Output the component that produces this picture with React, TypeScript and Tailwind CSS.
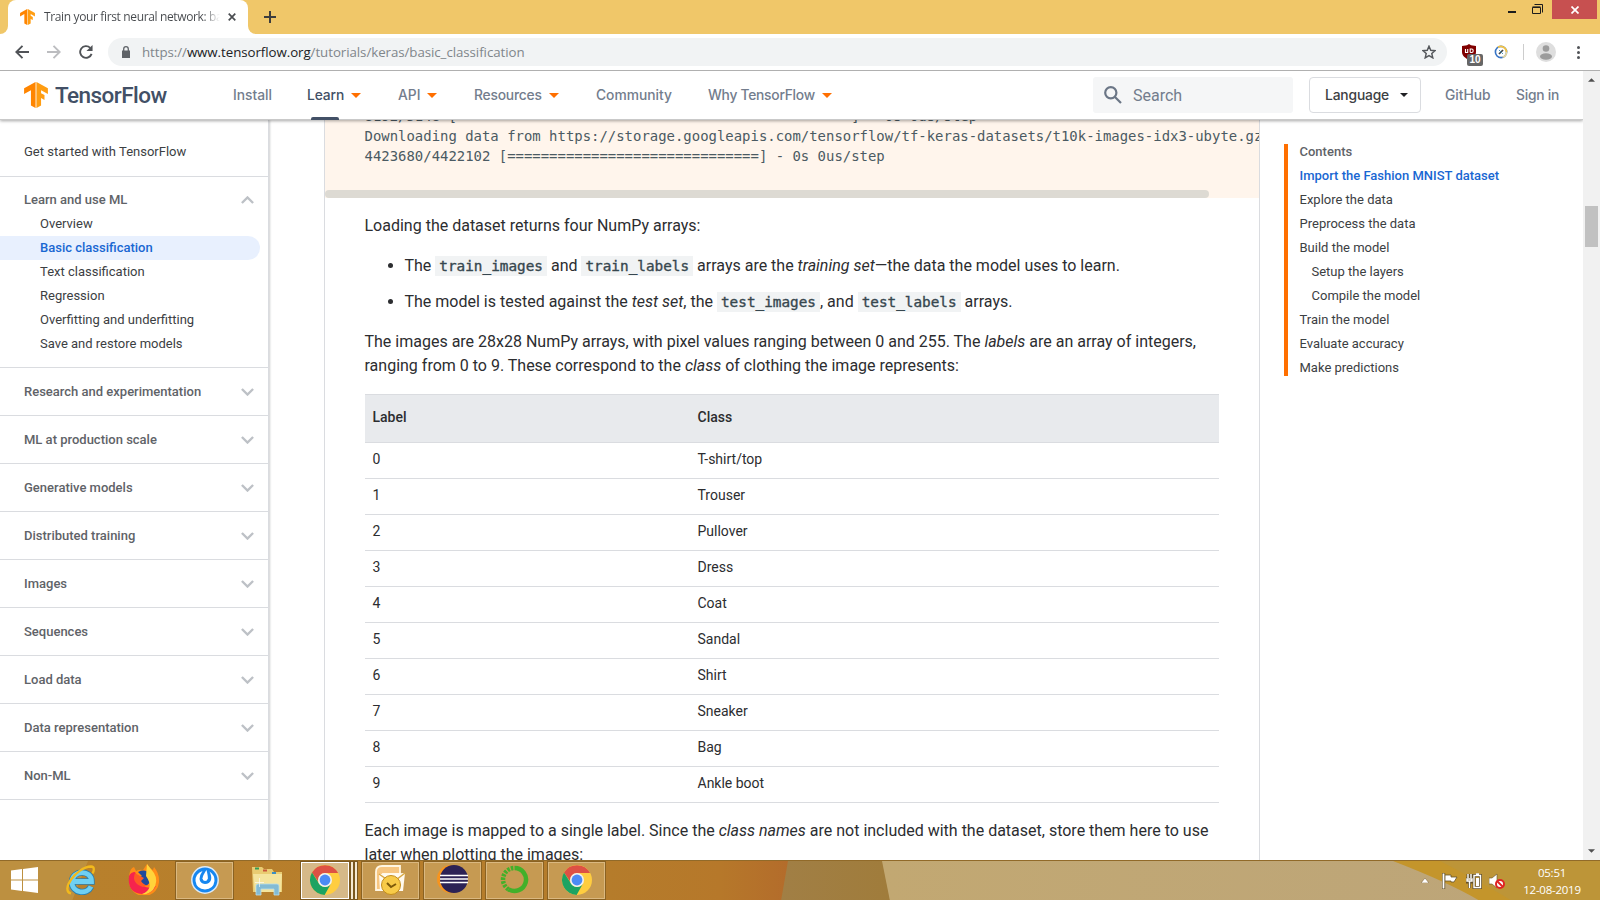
import React from "react";

const sections = ["Research and experimentation", "ML at production scale", "Generative models", "Distributed training", "Images", "Sequences", "Load data", "Data representation", "Non-ML"];
const learnLinks = ["Overview", "Basic classification", "Text classification", "Regression", "Overfitting and underfitting", "Save and restore models"];
const rows = ["T-shirt/top", "Trouser", "Pullover", "Dress", "Coat", "Sandal", "Shirt", "Sneaker", "Bag", "Ankle boot"];
const toc = [
  ["Explore the data", false], ["Preprocess the data", false], ["Build the model", false], ["Setup the layers", true],
  ["Compile the model", true], ["Train the model", false], ["Evaluate accuracy", false], ["Make predictions", false],
] as const;

function TfLogo({ className }: { className: string }) {
  return (
    <svg className={className} viewBox="1.2 0 21.600 24" preserveAspectRatio="none">
      <path d="M11.540 0h.920v24h-.920z" fill="#ffd9a8" />
      <path d="M1.292 5.856 11.540 0v24l-4.095-2.378V7.603l-6.168 3.564z" fill="#ff8500" />
      <path d="m22.722 11.167-.014-5.310L12.460 0v24l4.095-2.378V14.870l3.092 1.788-.018-4.618-3.074-1.756V7.603z" fill="#ff9d12" />
    </svg>
  );
}

function Caret({ className }: { className: string }) {
  return <svg className={className} viewBox="0 0 10 5"><path d="M0 0h10L5 5z" fill="currentColor" /></svg>;
}

function Chevron({ up }: { up?: boolean }) {
  return (
    <svg className="h-[8px] w-[13px]" viewBox="0 0 13 8" fill="none" stroke="#bdc1c6" strokeWidth="2.400">
      <path d={up ? "M.9 7 6.5 1.5 12.1 7" : "M.9 1 6.5 6.5 12.1 1"} />
    </svg>
  );
}

function ChromeIcon() {
  return (
    <svg className="size-[30px]" viewBox="0 0 30 30">
      <circle cx="15" cy="15" r="15" fill="#ffcd40" />
      <path d="M2 7.500A15 15 0 0 1 28.100 8H15a7 7 0 0 0-6.500 9z" fill="#dd5144" />
      <path d="M2 7.500A15 15 0 0 0 14.600 30l6.500-11.500A7 7 0 0 1 9 18.500z" fill="#1da362" />
      <circle cx="15" cy="15" r="7" fill="#f1f1f1" />
      <circle cx="15" cy="15" r="5.400" fill="#4c8bf5" />
    </svg>
  );
}

function Tab() {
  return (
    <header className="flex h-[34px] shrink-0 items-start justify-between bg-[#f0c769]">
      <div className="flex h-[34px] items-end">
        <div className="h-[8px] w-[8px] bg-white"><div className="size-full rounded-br-[8px] bg-[#f0c769]" /></div>
        <div className="flex h-[34px] w-[240px] items-center rounded-t-[8px] bg-white pl-[12px]">
          <TfLogo className="h-[16px] w-[15px]" />
          <div className="ml-[9px] w-[176px] overflow-hidden whitespace-nowrap bg-gradient-to-r from-[#45484c] from-[90%] to-transparent bg-clip-text font-['Open_Sans',sans-serif] text-[12px] tracking-[-0.36px] text-transparent">Train your first neural network: basic classification</div>
          <svg className="ml-[8px] size-[8px]" viewBox="0 0 9 9" stroke="#4a4d51" strokeWidth="1.900"><path d="m.8.8 7.400 7.400M8.200.8.8 8.200" /></svg>
        </div>
        <div className="h-[8px] w-[8px] bg-white"><div className="size-full rounded-bl-[8px] bg-[#f0c769]" /></div>
        <svg className="mb-[11px] ml-[8px] size-[12px]" viewBox="0 0 12 12" stroke="#3d3d3d" strokeWidth="2"><path d="M6 0v12M0 6h12" /></svg>
      </div>
      <div className="flex items-start pr-[3px]">
        <div className="mr-[16px] mt-[11px] h-[2px] w-[8px] bg-[#1c1c1c]" />
        <svg className="mr-[9px] mt-[4px] h-[11px] w-[11px]" viewBox="0 0 11 11" fill="none" stroke="#1c1c1c"><path d="M.5 3.500h8v6h-8zM.5 2.900h8M2.500.5h8v8" /></svg>
        <div className="flex h-[19px] w-[45px] items-center justify-center bg-[#c75050]">
          <svg className="size-[8px]" viewBox="0 0 8 8" stroke="white" strokeWidth="1.700"><path d="m.5.5 7 7M7.500.5l-7 7" /></svg>
        </div>
      </div>
    </header>
  );
}

function Toolbar() {
  return (
    <div className="flex h-[37px] shrink-0 items-center border-b border-[#b0b0b0] bg-white">
      <svg className="ml-[15px] h-[14px] w-[14px]" viewBox="0 0 14 14" fill="none" stroke="#505357" strokeWidth="1.900"><path d="M14 7H1.500M7.500.8 1.300 7l6.200 6.200" /></svg>
      <svg className="ml-[18px] h-[14px] w-[14px]" viewBox="0 0 14 14" fill="none" stroke="#bcbdc0" strokeWidth="1.900"><path d="M0 7h12.500M6.500.8 12.700 7l-6.200 6.200" /></svg>
      <svg className="ml-[18px] h-[14px] w-[14px]" viewBox="0 0 15 15" fill="none" stroke="#505357" strokeWidth="2"><path d="M13.500 9.500A6.300 6.300 0 1 1 12 3" /><path d="M14.500 0v6.500H8z" fill="#505357" stroke="none" /></svg>
      <div className="ml-[15px] flex h-[28px] w-[1339px] items-center rounded-full bg-[#f1f3f4] pl-[14px] pr-[11px]">
        <svg className="h-[12px] w-[8px]" viewBox="0 0 8 12"><path d="M0 4.500h8V12H0z" fill="#5f6368" /><path d="M1.700 5V3a2.300 2.300 0 0 1 4.600 0v2" fill="none" stroke="#5f6368" strokeWidth="1.300" /></svg>
        <div className="ml-[12px] flex-1 whitespace-nowrap pt-[2px] font-['Open_Sans',sans-serif] text-[13.300px] tracking-[-0.06px] text-[#80868b]"><span>https://</span><span className="text-[#202124]">www.tensorflow.org</span>/tutorials/keras/basic_classification</div>
        <svg className="size-[14px]" viewBox="0 0 24 24" fill="none" stroke="#54575b" strokeWidth="2.500"><path d="m12 2 3 7 7.500.7-5.700 5 1.700 7.300-6.500-3.900L5.500 22l1.700-7.300-5.700-5L9 9z" /></svg>
      </div>
      <div className="relative ml-[15px] h-[22px] w-[21px]">
        <svg className="mt-[3px] h-[16px] w-[14px]" viewBox="0 0 14 16"><path d="m7 0 2 1.200 5 .8v6c0 4-4 6.500-7 8-3-1.500-7-4-7-8V2l5-.8z" fill="#800000" /><path d="M3.500 5v3.500h2.200V5M8.200 4.500v4M8.200 5h1.500q1.500 0 1.500 1.700T9.700 8.500H8.200" fill="none" stroke="white" strokeWidth="1.100" /></svg>
        <div className="absolute left-[5px] top-[13px] flex h-[12px] w-[16px] items-center justify-center rounded-[2px] bg-[#666] font-['Liberation_Sans',sans-serif] text-[10px] font-bold leading-none text-white">10</div>
      </div>
      <svg className="ml-[11px] size-[14px]" viewBox="0 0 14 14" fill="none"><circle cx="7" cy="7" r="5.600" fill="white" stroke="#3975c6" strokeWidth="1.600" /><path d="M4 2.200A5.700 5.700 0 0 1 12.500 7" stroke="#f4c445" strokeWidth="1.700" /><path d="M12.500 7a5.500 5.500 0 0 1-4 5.300" stroke="#e5d6a0" strokeWidth="1.700" /><path d="m5 9 4-4" stroke="#444" strokeWidth="1.700" /><path d="m5 5 4 4" stroke="#4c93bb" /></svg>
      <div className="ml-[15px] h-[16px] w-px bg-[#cdcdcd]" />
      <svg className="ml-[12px] size-[20px]" viewBox="0 0 20 20"><circle cx="10" cy="10" r="10" fill="#dedede" /><circle cx="10" cy="6.500" r="3.300" fill="#9c9c9c" /><ellipse cx="10" cy="14.500" rx="6" ry="3.200" fill="#9c9c9c" /></svg>
      <div className="ml-[21px] flex flex-col gap-[2px]"><i className="size-[3px] rounded-full bg-[#505357]" /><i className="size-[3px] rounded-full bg-[#505357]" /><i className="size-[3px] rounded-full bg-[#505357]" /></div>
    </div>
  );
}

function SiteHeader() {
  return (
    <nav className="relative z-10 flex h-[49px] shrink-0 items-center border-b border-[#c9c9c9] bg-white pl-[24px] font-[Inter,sans-serif] text-[13.800px] font-medium text-[#737d8d] shadow-[0_1px_3px_rgba(0,0,0,0.35)]">
      <TfLogo className="h-[26px] w-[24px]" />
      <div className="ml-[7px] w-[112px] whitespace-nowrap pt-[2px] font-[Roboto,sans-serif] text-[22.500px] tracking-[-0.55px] text-[#425066]">TensorFlow</div>
      <div className="ml-[66px] w-[74px]">Install</div>
      <div className="relative flex w-[91px] items-center gap-[7px] self-stretch text-[#425066]"><span className="w-[37px] tracking-[-0.1px]">Learn</span><Caret className="h-[5px] w-[10px] text-[#ff6f00]" /><div className="absolute bottom-[-1px] left-[4px] h-[3px] w-[28px] rounded-t-[2px] bg-[#425066]" /></div>
      <div className="flex w-[76px] items-center gap-[7px]"><span className="w-[22px]">API</span><Caret className="h-[5px] w-[10px] text-[#ff6f00]" /></div>
      <div className="flex w-[122px] items-center gap-[7px]"><span className="w-[68px] tracking-[-0.2px]">Resources</span><Caret className="h-[5px] w-[10px] text-[#ff6f00]" /></div>
      <div className="w-[112px] tracking-[0px]">Community</div>
      <div className="flex w-[385px] items-center gap-[7px] whitespace-nowrap"><span className="w-[107px] tracking-[-0.25px]">Why TensorFlow</span><Caret className="h-[5px] w-[10px] text-[#ff6f00]" /></div>
      <div className="flex h-[36px] w-[200px] items-center rounded-[3px] bg-[#f5f6f7] pl-[11px]">
        <svg className="size-[18px]" viewBox="0 0 18 18" fill="none" stroke="#6b7686" strokeWidth="2.200"><circle cx="6.800" cy="6.800" r="5.600" /><path d="m11 11 6 6" /></svg>
        <span className="ml-[11px] pt-[2px] font-[Roboto,sans-serif] text-[16px] font-normal">Search</span>
      </div>
      <div className="ml-[16px] flex h-[36px] w-[112px] items-center justify-between rounded-[4px] border border-[#dadce0] pl-[15px] pr-[12px] text-[#3c4043]"><span className="tracking-[-0.15px]">Language</span><Caret className="h-[4px] w-[8px] text-[#202124]" /></div>
      <div className="ml-[24px] w-[71px]">GitHub</div>
      <div className="whitespace-nowrap tracking-[-0.25px]">Sign in</div>
    </nav>
  );
}

function Sidebar() {
  return (
    <aside className="flex w-[269px] shrink-0 flex-col border-r border-[#dadce0] text-[13px] shadow-[1px_0_2px_rgba(60,64,67,0.25)]">
      <div className="flex h-[57px] shrink-0 items-center border-b border-[#dadce0] pl-[24px] pt-[7px] text-[#3c4043]">Get started with TensorFlow</div>
      <div className="flex h-[191px] shrink-0 flex-col border-b border-[#dadce0] pt-[11px] leading-[24px]">
        <div className="flex h-[24px] items-center justify-between pl-[24px] pr-[14px] font-medium text-[#5f6368]">Learn and use ML<Chevron up /></div>
        {learnLinks.map((label, i) => (
          <div key={label} className={i === 1 ? "h-[24px] w-[260px] rounded-r-full bg-[#e8f0fe] pl-[40px] font-medium text-[#1967d2]" : "h-[24px] pl-[40px] text-[#3c4043]"}>{label}</div>
        ))}
      </div>
      {sections.map((label) => (
        <div key={label} className="flex h-[48px] shrink-0 items-center justify-between border-b border-[#dadce0] pl-[24px] pr-[14px] font-medium text-[#5f6368]">{label}<Chevron /></div>
      ))}
    </aside>
  );
}

function Code({ children }: { children: React.ReactNode }) {
  return <code className="bg-[#f1f3f4] px-[4px] py-[2px] font-['DejaVu_Sans_Mono',monospace] text-[14.350px] text-[#37474f] [-webkit-text-stroke:0.350px_#37474f]">{children}</code>;
}

function Article() {
  return (
    <main className="ml-[55px] flex w-[936px] shrink-0 flex-col border-x border-[#dadce0] text-[16px] leading-[24px] text-[#2c2d30]">
      <div className="flex h-[78px] shrink-0 flex-col justify-end overflow-hidden bg-[#fff5ec]">
        <pre className="mb-[24px] h-[60px] pl-[39.500px] font-['DejaVu_Sans_Mono',monospace] text-[13.950px] leading-[20px] text-[#4b5a62]">
{`8192/5148 [===============================================] - 0s 0us/step
Downloading data from https://storage.googleapis.com/tensorflow/tf-keras-datasets/t10k-images-idx3-ubyte.gz
4423680/4422102 [==============================] - 0s 0us/step`}
        </pre>
        <div className="h-[8px] w-[884px] shrink-0 rounded-full bg-[#dddad3]" />
      </div>
      <div className="flex flex-col pl-[39.500px] pr-[40px] pt-[16px]">
        <p>Loading the dataset returns four NumPy arrays:</p>
        <ul className="my-[16px] flex list-disc flex-col gap-[12px] pl-[40px]">
          <li className="h-[24px]">The <Code>train_images</Code> and <Code>train_labels</Code> arrays are the <em>training set</em>—the data the model uses to learn.</li>
          <li className="h-[24px]">The model is tested against the <em>test set</em>, the <Code>test_images</Code>, and <Code>test_labels</Code> arrays.</li>
        </ul>
        <p className="whitespace-nowrap">The images are 28x28 NumPy arrays, with pixel values ranging between 0 and 255. The <em>labels</em> are an array of integers,<br />ranging from 0 to 9. These correspond to the <em>class</em> of clothing the image represents:</p>
        <div className="mt-[16px] flex flex-col text-[14px]">
          <div className="flex h-[48px] items-center border-t border-[#dadce0] bg-[#e8eaed] pb-[3px] pl-[8px] font-medium"><div className="w-[325px]">Label</div><div>Class</div></div>
          {rows.map((label, i) => (
            <div key={label} className="flex h-[36px] items-center border-t border-[#dadce0] pb-[4px] pl-[8px] last:h-[37px] last:border-b"><div className="w-[325px]">{i}</div><div>{label}</div></div>
          ))}
        </div>
        <p className="mt-[16px] whitespace-nowrap">Each image is mapped to a single label. Since the <em>class names</em> are not included with the dataset, store them here to use<br />later when plotting the images:</p>
      </div>
    </main>
  );
}

function TaskButton({ children }: { children: React.ReactNode }) {
  return <div className="mr-[3px] flex h-[39px] w-[59px] items-center justify-center border border-[#8a6222] bg-[#c69a52] pb-[2px] shadow-[inset_0_0_0_1px_#dab880]">{children}</div>;
}

function Taskbar() {
  return (
    <footer className="relative flex h-[40px] shrink-0 items-center overflow-hidden border-t border-[#916a29] bg-[#bb8430]">
      <svg className="absolute inset-0 h-[40px] w-[1600px]" viewBox="0 0 1600 40" preserveAspectRatio="none">
        <defs>
          <linearGradient id="wood" gradientUnits="userSpaceOnUse" x1="0" x2="800"><stop offset="0" stopColor="#b98a38" /><stop offset=".1" stopColor="#b8802c" /><stop offset=".76" stopColor="#b57c2b" /><stop offset=".9" stopColor="#b6782a" /><stop offset="1" stopColor="#b36a2b" /></linearGradient>
          <linearGradient id="sand" gradientUnits="userSpaceOnUse" x1="780" x2="890"><stop offset="0" stopColor="#a17f45" /><stop offset="1" stopColor="#a07c3b" /></linearGradient>
          <linearGradient id="tan"><stop offset="0" stopColor="#c2a872" /><stop offset="1" stopColor="#bca57a" /></linearGradient>
        </defs>
        <path d="M0 0h1600v40H0z" fill="url(#wood)" />
        <path d="M0 0h88L72 40H0z" fill="#bd9040" />
        <path d="M788 0h820v40H781z" fill="url(#sand)" />
        <path d="M882 0h720v40H890z" fill="url(#tan)" />
        <path d="M1393 0h207v40h-120q-30-18-87-40z" fill="#c4952b" />
        <path d="M1440 0h160v40h-88q-22-14-72-40z" fill="#bd9538" />
      </svg>
      <div className="relative flex h-[40px] items-center">
        <svg className="ml-[11px] h-[26px] w-[27px] -translate-y-px" viewBox="0 0 27 26"><path d="M0 3.500 11 2v10.500H0zM12 1.900 27 0v12.500H12zM0 13.500h11V24L0 22.500zM12 13.500h15V26l-15-2z" fill="white" /></svg>
        <svg className="ml-[28px] h-[30px] w-[30px] -translate-y-px" viewBox="0 0 30 30" fill="none"><path d="M25 21.500C21 30 6 28.500 6 17 6 5 25.500 4 25.500 16.500H8" stroke="#2b7fae" strokeWidth="6.500" /><path d="M25 21.500C21 30 6 28.500 6 17 6 5 25.500 4 25.500 16.500H8" stroke="#6fd0f3" strokeWidth="4.800" /><path d="M5 28.500C-6 26 10 2 25 1.500c4 0 3 4.500 1.500 7" stroke="#f2b91c" strokeWidth="2.300" /></svg>
        <svg className="ml-[32px] size-[31px] -translate-y-px" viewBox="0 0 31 31"><path d="M1 12Q2 4 6 3l2 4q4-2 7-1l4-6q2 4 6 6l1-3q5 6 5 13a15 15 0 0 1-30 2z" fill="#ff8c16" /><path d="M1 12q-2 17 13 18 9 1 14-8-8 4-14-1L7 8q-4 0-6 4z" fill="#f6244d" /><path d="M10 8q8-4 12 3 2 10-6 11-8 0-7-7l5-3z" fill="#20499c" /><path d="m19 0 7 9q5 8-1 17-5 5-11 4 13-5 4-18z" fill="#ffd33b" /><path d="M7 9q-4 10 8 14l6-2q-5 1-8-4l3-3-4-2z" fill="#ff5924" /></svg>
        <div className="ml-[16px]"><TaskButton><svg className="size-[28px]" viewBox="0 0 28 28"><circle cx="14" cy="14" r="13.200" fill="#1687f0" stroke="#dfeaf3" strokeWidth="1.500" /><path d="M11.500 5Q4 8 4.500 15q1 8 9.500 8.500 8.500-.5 9.500-8.500.3-6-5-9.500 2.500 5 1.500 8.500-1.500 4-6 4-5-.5-5.500-5 .3-4.500 3-8z" fill="white" /><path d="M15.500 4q1.500 6 1.300 8.500-.5 2.500-2.800 2.500-2.500-.3-2.500-2.800.5-3.200 4-8.200z" fill="white" /></svg></TaskButton></div>
        <svg className="ml-[14px] h-[30px] w-[34px]" viewBox="0 0 34 30"><path d="M1 1h10l2 2h8l2 3h8v20H2z" fill="#e9cc72" /><path d="M4 2.500h4" stroke="#349b56" strokeWidth="2" /><path d="M12 4.500h4" stroke="#c8553a" strokeWidth="2" /><path d="M21 7h4" stroke="#3b8fc4" strokeWidth="2" /><path d="M2 8h29l-1 18H4z" fill="#f4e49d" /><path d="M5 29V20q0-2 2-2h19q2 0 2 2v9h-5v-6H10v6z" fill="#83bbd4" stroke="#b9dde9" strokeWidth=".8" /><path d="M8.500 12v9M4 16.500h9" stroke="white" strokeOpacity=".8" strokeWidth=".8" /></svg>
        <div className="ml-[15px] flex h-[39px] w-[50px] items-center justify-center border border-[#7a571f] bg-[#d6b988] pb-[2px] shadow-[inset_0_0_0_1px_#fff]"><ChromeIcon /></div>
        <div className="h-[39px] w-[4px] border border-[#7a571f] bg-[#f5e8d2]" /><div className="mr-[3px] h-[39px] w-[4px] border border-[#7a571f] bg-[#f5e8d2]" />
        <TaskButton><svg className="h-[30px] w-[31px]" viewBox="0 0 31 30"><path d="M1 25V7q0-6 6-6h18v8H8v16z" fill="#f7c681" stroke="#fff6e2" strokeWidth="1.800" /><path d="m4 9 26-1-2 18H5z" fill="#fffaf0" /><path d="m4 9 13 9L30 8" fill="none" stroke="#d9a841" strokeWidth="1.500" /><circle cx="16" cy="20" r="9.500" fill="#f8cb48" stroke="#c38d1c" /><path d="m12 18 4 4 5-3" fill="none" stroke="#7d5a0a" strokeWidth="2" /></svg></TaskButton>
        <TaskButton><svg className="size-[31px]" viewBox="0 0 31 31"><circle cx="14" cy="15" r="14" fill="#f7941e" /><circle cx="17" cy="15" r="14" fill="#2c2255" /><path d="M3 11.500h28M3 15h28M3 18.500h28" stroke="white" strokeWidth="1.700" /></svg></TaskButton>
        <TaskButton><svg className="size-[29px]" viewBox="0 0 29 29" fill="none" stroke="#43b02a"><path d="M14.500 3a11.500 11.500 0 1 1-6 21.300" strokeWidth="4.500" /><path d="M8.500 24.300A11.500 11.500 0 0 1 14.500 3" strokeWidth="4.500" strokeDasharray="2.500 1.200" /></svg></TaskButton>
        <TaskButton><ChromeIcon /></TaskButton>
      </div>
      <div className="relative ml-auto flex items-center pr-[18px] text-white">
        <svg className="h-[5px] w-[8px]" viewBox="0 0 8 5"><path d="M0 5h8L4 0z" fill="white" stroke="#77592c" strokeWidth=".5" /></svg>
        <svg className="ml-[13px] h-[16px] w-[16px]" viewBox="0 0 16 16"><path d="M1.500 0v16" stroke="#63512a" strokeWidth="3.400" /><path d="M3 2h6v2h6l-3 5H9V8H3z" fill="white" stroke="#63512a" strokeWidth=".8" /><path d="M1.500 .5v15" stroke="white" strokeWidth="1.800" /></svg>
        <svg className="ml-[8px] h-[16px] w-[16px]" viewBox="0 0 16 16" fill="none"><path d="M8 2.500h6.500v12H8zM10 1h3M2 1v4M5 1v4M.5 6h6v3h-6zM3.500 9v6" stroke="#63512a" strokeWidth="3" /><path d="M8 2.500h6.500v12H8zM10 1h3M2 1v4M5 1v4M1 6h5v2H1zM3.500 8v7" stroke="white" strokeWidth="1.400" /><path d="M10 5h3v8h-3z" fill="white" /></svg>
        <svg className="ml-[7px] h-[16px] w-[16px]" viewBox="0 0 16 16"><path d="M0 5h3l5-4v14l-5-4H0z" fill="white" stroke="#63512a" strokeWidth=".6" /><circle cx="11" cy="11" r="4" fill="white" stroke="#e02424" strokeWidth="2" /><path d="m8 8 6 6" stroke="#e02424" strokeWidth="2" /></svg>
        <div className="ml-[17px] flex w-[60px] flex-col items-center whitespace-nowrap font-['Open_Sans',sans-serif] text-[11.500px] leading-[17px] tracking-[-0.25px]"><span>05:51</span><span>12-08-2019</span></div>
      </div>
    </footer>
  );
}

export default function App() {
  return (
    <div className="flex h-[900px] w-[1600px] flex-col overflow-hidden bg-white font-[Roboto,sans-serif]">
      <Tab />
      <Toolbar />
      <div className="flex min-h-0 flex-1">
        <div className="flex h-full w-[1583px] flex-col overflow-hidden">
          <SiteHeader />
          <div className="flex min-h-0 flex-1 overflow-hidden">
            <Sidebar />
            <Article />
            <aside className="ml-[24px] mt-[24px] flex h-[232px] w-[270px] flex-col border-l-4 border-[#ff6f00] pl-[11.500px] text-[13px] leading-[24px] text-[#3c4043]">
              <div className="mt-[-4px] font-medium text-[#5f6368]">Contents</div>
              <div className="font-medium text-[#1967d2]">Import the Fashion MNIST dataset</div>
              {toc.map(([label, nested]) => <div key={label} className={nested ? "pl-[12px]" : ""}>{label}</div>)}
            </aside>
          </div>
        </div>
        <div className="flex w-[17px] flex-col items-center bg-[#f1f1f1] pb-[7px] pt-[7px] text-[#505050]">
          <Caret className="h-[4px] w-[7px] rotate-180" />
          <div className="mt-[124px] h-[41px] w-[13px] bg-[#c1c1c1]" />
          <Caret className="mt-auto h-[4px] w-[7px]" />
        </div>
      </div>
      <Taskbar />
    </div>
  );
}
